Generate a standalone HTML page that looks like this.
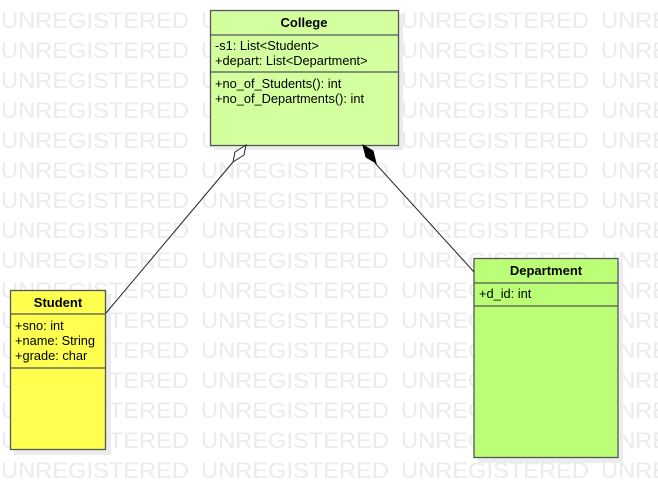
<!DOCTYPE html>
<html><head><style>
body{margin:0;width:658px;height:498px;background:#fff;overflow:hidden;font-family:"Liberation Sans",sans-serif}
svg{display:block}
</style></head><body>
<svg width="658" height="498" xmlns="http://www.w3.org/2000/svg" font-family="Liberation Sans, sans-serif">
<defs>
<pattern id="wm" x="0" y="0" width="200" height="30" patternUnits="userSpaceOnUse">
<text x="1" y="28" font-size="22" fill="#ebebeb" textLength="188" lengthAdjust="spacingAndGlyphs">UNREGISTERED</text>
</pattern>
</defs>
<rect x="0" y="0" width="658" height="480" fill="url(#wm)"/>
<rect x="214" y="14" width="189" height="136" fill="#ececec"/>
<rect x="14" y="294" width="97" height="161" fill="#ececec"/>
<rect x="478" y="262" width="145" height="201" fill="#ececec"/>
<rect x="210.5" y="10.5" width="188" height="135" fill="#d4ff9f" stroke="#555" stroke-width="1.3"/>
<line x1="210" y1="35" x2="399" y2="35" stroke="#555" stroke-width="1.3"/>
<line x1="210" y1="72" x2="399" y2="72" stroke="#555" stroke-width="1.3"/>
<text x="304" y="27" text-anchor="middle" font-size="13" font-weight="bold">College</text>
<g font-size="12.8"><text x="215" y="50">-s1: List&lt;Student&gt;</text><text x="215" y="65">+depart: List&lt;Department&gt;</text>
<text x="215" y="88">+no_of_Students(): int</text><text x="215" y="103">+no_of_Departments(): int</text></g>
<rect x="10.5" y="290.5" width="95" height="159" fill="#ffff4f" stroke="#555" stroke-width="1.3"/>
<line x1="10" y1="314" x2="106" y2="314" stroke="#555" stroke-width="1.3"/>
<line x1="10" y1="368" x2="106" y2="368" stroke="#555" stroke-width="1.3"/>
<text x="58" y="307" text-anchor="middle" font-size="13" font-weight="bold">Student</text>
<g font-size="12.8"><text x="15" y="330">+sno: int</text><text x="15" y="345">+name: String</text><text x="15" y="360">+grade: char</text></g>
<rect x="474" y="258.5" width="144" height="199" fill="#bbff77" stroke="#555" stroke-width="1.3"/>
<line x1="474" y1="283" x2="618" y2="283" stroke="#555" stroke-width="1.3"/>
<line x1="474" y1="306" x2="618" y2="306" stroke="#555" stroke-width="1.3"/>
<text x="546" y="275" text-anchor="middle" font-size="13" font-weight="bold">Department</text>
<text x="479" y="298" font-size="12.8">+d_id: int</text>
<line x1="233" y1="162" x2="106" y2="313" stroke="#222" stroke-width="1"/>
<polygon points="246,145 244,155 233,162 235,152" fill="#fff" stroke="#222" stroke-width="1"/>
<line x1="375" y1="163" x2="474" y2="272" stroke="#222" stroke-width="1"/>
<polygon points="363,145 373,151 376,163 366,157" fill="#000" stroke="#000" stroke-width="1"/>
</svg>
</body></html>
